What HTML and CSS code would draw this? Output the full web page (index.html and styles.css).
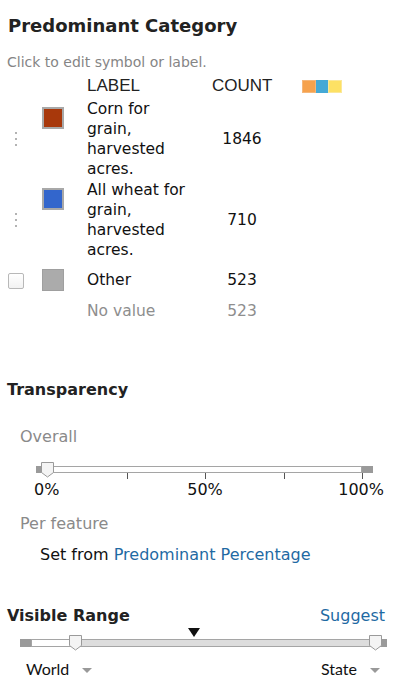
FILE: index.html
```html
<!DOCTYPE html>
<html>
<head>
<meta charset="utf-8">
<link rel="stylesheet" href="styles.css">
</head>
<body>
<div class="panel">
  <h2 class="title">Predominant Category</h2>
  <p class="hint">Click to edit symbol or label.</p>

  <div class="legend">
    <div class="hcell"></div>
    <div class="hcell"></div>
    <div class="hcell head">LABEL</div>
    <div class="hcell head">COUNT</div>
    <div class="hcell"><div class="ramp"><span class="r1"></span><span class="r2"></span><span class="r3"></span></div></div>

    <div class="handle"><span></span><span></span><span></span></div>
    <div class="swcell"><div class="swatch corn"></div></div>
    <div class="label">Corn for grain, harvested acres.</div>
    <div class="count">1846</div>
    <div></div>

    <div class="handle"><span></span><span></span><span></span></div>
    <div class="swcell"><div class="swatch wheat"></div></div>
    <div class="label">All wheat for grain, harvested acres.</div>
    <div class="count">710</div>
    <div></div>

    <div class="handle"><div class="checkbox"></div></div>
    <div class="swcell"><div class="swatch other"></div></div>
    <div class="label single">Other</div>
    <div class="count single">523</div>
    <div></div>

    <div></div>
    <div></div>
    <div class="label muted">No value</div>
    <div class="count muted">523</div>
    <div></div>
  </div>

  <h3 class="section trans">Transparency</h3>
  <div class="sub overall">Overall</div>
  <div class="tslider">
    <div class="track">
      <div class="end endl"></div>
      <div class="mid"></div>
      <div class="end endr"></div>
      <svg class="thumb t0" width="13" height="16" viewBox="0 0 13 16"><path d="M0.5 0.5 H12.5 V10.5 L6.5 15 L0.5 10.5 Z" fill="#f4f4f4" stroke="#9a9a9a"/></svg>
    </div>
    <div class="ticks"><span></span><span></span><span></span><span></span><span></span></div>
  </div>
  <div class="tlabels"><span class="tl0">0%</span><span class="tl50">50%</span><span class="tl100">100%</span></div>

  <div class="sub perf">Per feature</div>
  <div class="setfrom">Set from <a class="link">Predominant Percentage</a></div>

  <div class="rangehead">
    <h3 class="section">Visible Range</h3>
    <a class="link">Suggest</a>
  </div>
  <div class="rslider">
    <div class="marker"></div>
    <div class="rtrack">
      <div class="rend rendl"></div>
      <div class="rout"></div>
      <div class="rin"></div>
      <div class="rend rendr"></div>
      <svg class="thumb ta" width="13" height="16" viewBox="0 0 13 16"><path d="M0.5 0.5 H12.5 V10.5 L6.5 15 L0.5 10.5 Z" fill="#f4f4f4" stroke="#9a9a9a"/></svg>
      <svg class="thumb tb" width="13" height="16" viewBox="0 0 13 16"><path d="M0.5 0.5 H12.5 V10.5 L6.5 15 L0.5 10.5 Z" fill="#f4f4f4" stroke="#9a9a9a"/></svg>
    </div>
  </div>
  <div class="scales">
    <span class="scale">World <i class="caret"></i></span>
    <span class="scale">State <i class="caret"></i></span>
  </div>
</div>
</body>
</html>
```
FILE: styles.css
```css
* { box-sizing: border-box; }
body {
  margin: 0;
  background: #fff;
  font-family: "DejaVu Sans", Verdana, sans-serif;
  color: #111;
}
.panel {
  width: 400px;
  padding: 0 0 0 8px;
}
.title {
  margin: 0;
  padding-top: 14px;
  font-size: 18px;
  line-height: 24px;
  font-weight: bold;
  color: #222;
}
.hint {
  margin: 0;
  padding-top: 15px;
  font-size: 14px;
  line-height: 18px;
  color: #858585;
  margin-left: -1px;
}
.legend {
  display: grid;
  grid-template-columns: 34px 45px 125px 60px 60px;
  row-gap: 1px;
  margin-top: 3px;
}
.hcell { height: 24px; }
.head {
  font-family: "Liberation Sans", Arial, sans-serif;
  font-size: 17px;
  line-height: 24px;
  color: #222;
}
.ramp {
  display: flex;
  margin: 6px 0 0 30px;
  width: 40px;
  height: 13px;
}
.ramp span { flex: 1; }
.r1 { background: #f6a24d; border: 1px solid #f5b77a; }
.r2 { background: #45a9d6; }
.r3 { background: #fde164; border: 1px solid #fbe89a; }
.handle {
  display: flex;
  flex-direction: column;
  align-items: flex-start;
  justify-content: center;
  gap: 4px;
  padding-left: 7px;
}
.handle span {
  width: 2px;
  height: 2px;
  background: #9a9a9a;
  border-radius: 1px;
}
.checkbox {
  width: 16px;
  height: 16px;
  margin-left: -7px;
  border: 1px solid #b8b8b8;
  border-radius: 2px;
  background: linear-gradient(#fff, #f2f2f2);
}
.swcell { padding-top: 8px; }
.swatch {
  width: 22px;
  height: 22px;
  border: 2px solid #a8a8a8;
}
.corn { background: #a8380b; }
.wheat { background: #3366cc; }
.other { background: #ababab; border-color: #9f9f9f; border-width: 1px; }
.label {
  font-size: 15.5px;
  line-height: 20px;
  color: #111;
  padding-right: 18px;
}
.count {
  font-size: 15.5px;
  line-height: 20px;
  text-align: center;
  align-self: center;
  color: #111;
}
.single { line-height: 39px; }
.muted { color: #8e8e8e; }

.section {
  margin: 0;
  font-size: 16px;
  font-weight: bold;
  line-height: 20px;
  color: #222;
}
.trans { margin-top: 59px; margin-left: -1px; }
.sub {
  font-size: 16px;
  line-height: 20px;
  color: #8a8a8a;
  margin-left: 12px;
}
.overall { margin-top: 27px; }
.tslider {
  margin: 19px 0 0 28px;
  width: 337px;
  position: relative;
}
.track {
  position: relative;
  display: flex;
  height: 7px;
}
.end { background: #9a9a9a; }
.endl { width: 7px; }
.endr { width: 11px; }
.mid {
  flex: 1;
  background: #fff;
  border: 1px solid #a5a5a5;
}
.thumb { position: absolute; top: -4px; }
.t0 { left: 5px; }
.ticks {
  display: flex;
  justify-content: space-between;
  margin-left: 12px;
  width: 315px;
  height: 6px;
}
.ticks span { width: 1px; background: #555; }
.ticks span:first-child { visibility: hidden; }
.tlabels {
  display: grid;
  grid-template-columns: 1fr auto 1fr;
  width: 350px;
  margin-left: 26px;
  margin-top: 1px;
  font-size: 16px;
  line-height: 20px;
  color: #111;
}
.tl50 { margin-right: 8px; }
.tl100 { text-align: right; }
.perf { margin-top: 14px; }
.setfrom {
  margin: 11px 0 0 32px;
  font-size: 16px;
  line-height: 20px;
  color: #111;
}
.link { color: #1f6aa3; text-decoration: none; }
.rangehead {
  display: flex;
  justify-content: space-between;
  align-items: center;
  margin-top: 41px;
  width: 378px;
  margin-left: -1px;
  font-size: 16px;
  line-height: 20px;
}
.rslider {
  margin: 2px 0 0 12px;
  width: 367px;
}
.marker {
  width: 0;
  height: 0;
  margin-left: 168px;
  border-left: 6px solid transparent;
  border-right: 6px solid transparent;
  border-top: 9px solid #111;
}
.rtrack {
  position: relative;
  display: flex;
  height: 8px;
  margin-top: 2px;
}
.rend { background: #9a9a9a; }
.rendl { width: 11px; }
.rendr { width: 6px; }
.rout { width: 44px; background: #fff; border: 1px solid #a5a5a5; border-right: none; }
.rin { flex: 1; background: #ddd; border: 1px solid #a5a5a5; border-left: none; }
.ta { left: 49px; top: -4px; }
.tb { left: 349px; top: -4px; }
.scales {
  display: flex;
  justify-content: space-between;
  width: 354px;
  margin: 12px 0 0 18px;
  font-family: Lato, "Liberation Sans", sans-serif;
  font-size: 16px;
  line-height: 20px;
  color: #111;
}
.scale { display: inline-flex; align-items: center; }
.caret {
  display: inline-block;
  width: 0;
  height: 0;
  margin-left: 13px;
  margin-top: 3px;
  border-left: 5px solid transparent;
  border-right: 5px solid transparent;
  border-top: 5px solid #999;
}
```
